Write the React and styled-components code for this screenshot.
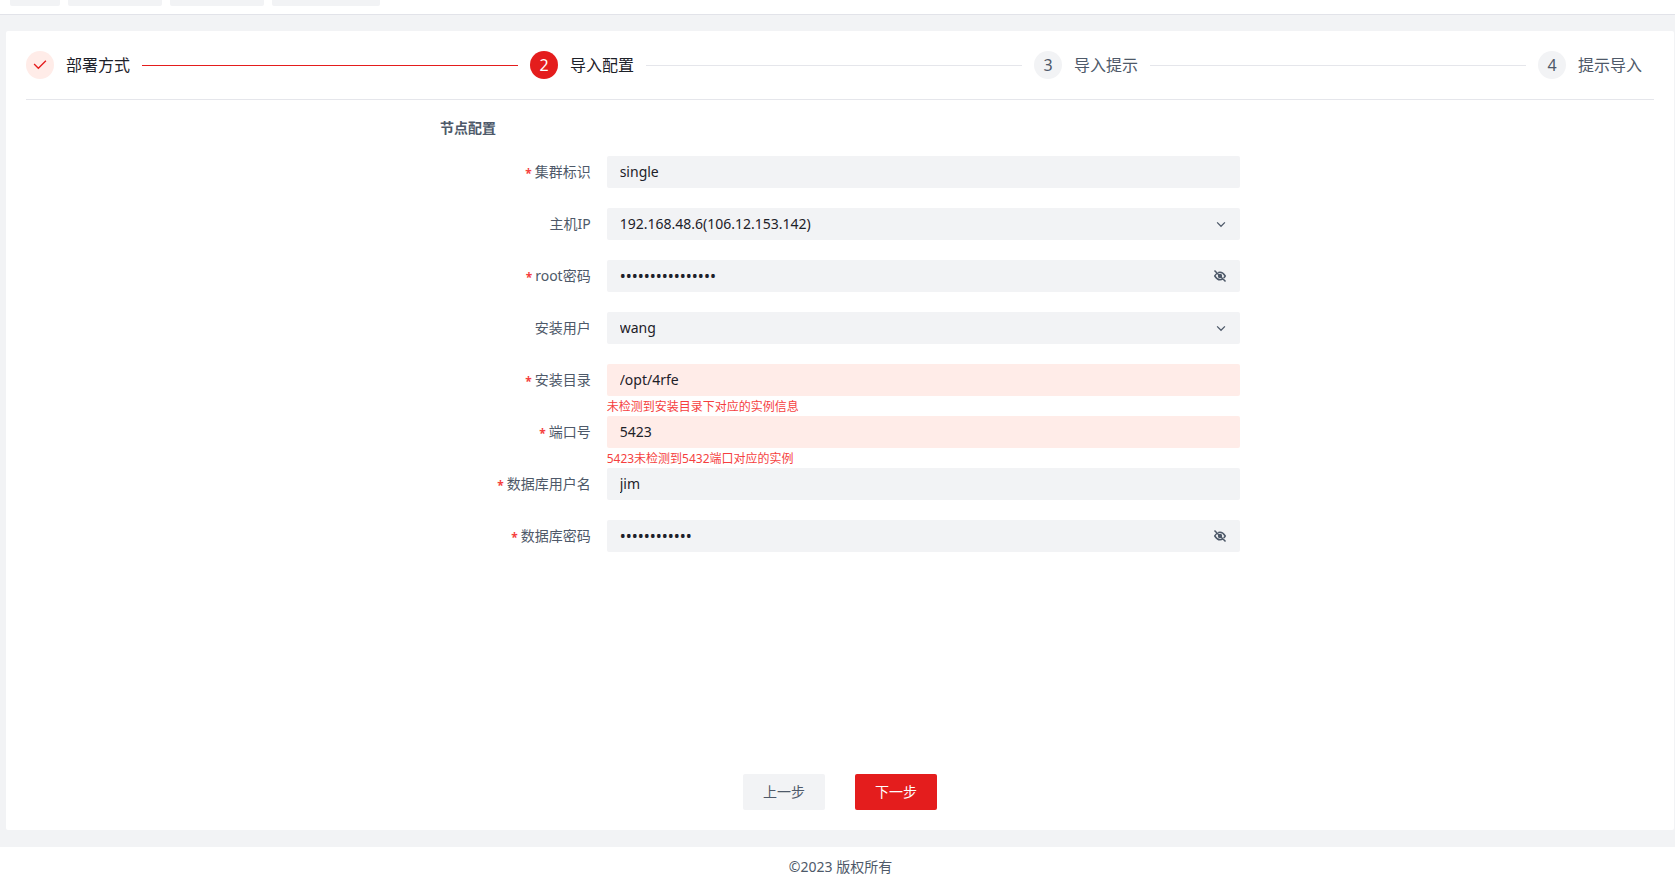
import React, { useState } from "react";
import styled, { createGlobalStyle } from "styled-components";

const GlobalStyle = createGlobalStyle`
  * {
    box-sizing: border-box;
  }

  body {
    margin: 0;
    background-color: #f2f3f5;
    color: #4e5969;
    font-family: "Noto Sans", "Noto Sans CJK SC", sans-serif;
    font-size: 14px;
    line-height: 22px;
  }

  button, input, select {
    font-family: inherit;
    font-size: inherit;
  }
`;

// Page
const Page = styled.div`
  display: flex;
  flex-direction: column;
  min-height: 100vh;
`;

const TabBar = styled.nav`
  display: flex;
  gap: 8px;
  padding: 0 10px 8px;
  background-color: #ffffff;
  border-bottom: 1px solid #e2e3e9;
`;

const Tab = styled.span`
  width: ${({ $width }) => $width}px;
  height: 6px;
  background-color: #f2f3f5;
  border-radius: 0 0 2px 2px;
`;

const Card = styled.main`
  flex: 1;
  display: flex;
  flex-direction: column;
  margin: 16px 1px 17px 6px;
  padding: 20px;
  background-color: #ffffff;
  border-radius: 2px;
`;

const Footer = styled.footer`
  padding: 9px 0 3px 6px;
  background-color: #ffffff;
  text-align: center;
`;

// Steps
const Steps = styled.ol`
  display: flex;
  margin: 0;
  padding: 0 0 20px;
  list-style: none;
  border-bottom: 1px solid #e5e6eb;
`;

const Step = styled.li`
  display: flex;
  align-items: center;
  gap: 12px;
  margin-right: 12px;
  flex: 1;
  color: ${({ $status }) => ($status === "wait" ? "#4e5969" : "#1d2129")};
  font-size: 16px;
  line-height: 28px;
  white-space: nowrap;

  &:last-child {
    flex: none;
  }
`;

const circleColors = {
  finish: { background: "#ffece8", color: "#e41d1d" },
  process: { background: "#e41d1d", color: "#ffffff" },
  wait: { background: "#f2f3f5", color: "#4e5969" },
};

const StepCircle = styled.span`
  display: flex;
  align-items: center;
  justify-content: center;
  width: 28px;
  height: 28px;
  border-radius: 50%;
  background-color: ${({ $status }) => circleColors[$status].background};
  color: ${({ $status }) => circleColors[$status].color};
`;

const StepLine = styled.span`
  flex: 1;
  height: 1px;
  background-color: ${({ $done }) => ($done ? "#e41d1d" : "#e5e6eb")};
`;

// Form
const Form = styled.form`
  flex: 1;
  display: flex;
  flex-direction: column;
`;

const Fields = styled.div`
  width: 100%;
  max-width: 800px;
  margin: 0 auto;
`;

const SectionTitle = styled.h2`
  margin: 17px 0;
  font-size: 14px;
  line-height: 22px;
  font-weight: 700;
`;

const Row = styled.div`
  display: grid;
  grid-template-columns: 5fr 19fr;
`;

const Label = styled.label`
  display: flex;
  justify-content: flex-end;
  gap: 3px;
  height: 32px;
  padding-right: 16px;
  line-height: 32px;
`;

const Required = styled.span`
  padding-top: 2px;
  color: #f53f3f;
  font-size: 12px;
  font-weight: 700;
`;

const Control = styled.div`
  position: relative;
  display: flex;
  align-items: center;
  height: 32px;
  padding-right: 12px;
  background-color: ${({ $error }) => ($error ? "#ffece8" : "#f2f3f5")};
  border-radius: 2px;
`;

const Input = styled.input`
  flex: 1;
  min-width: 0;
  height: 32px;
  padding: 0 13px 2px;
  border: none;
  outline: none;
  background: transparent;
  color: #1d2129;

  &[type="password"] {
    padding-bottom: 0;
    font-size: 16px;
  }
`;

const Select = styled.select`
  flex: 1;
  height: 32px;
  padding: 0 13px 2px;
  border: none;
  outline: none;
  appearance: none;
  background: transparent;
  color: #1d2129;
`;

const Arrow = styled.svg`
  position: absolute;
  right: 13px;
  pointer-events: none;
`;

const EyeButton = styled.button`
  display: flex;
  padding: 1px;
  border: none;
  background: transparent;
  color: #4e5969;
  cursor: pointer;
`;

const Message = styled.div`
  height: 20px;
  color: #f53f3f;
  font-size: 12px;
  line-height: 22px;
`;

const Actions = styled.div`
  display: flex;
  justify-content: center;
  gap: 30px;
  margin-top: auto;
`;

const Button = styled.button`
  height: 36px;
  padding: 0 20px 2px;
  border: none;
  border-radius: 2px;
  background-color: ${({ $primary }) => ($primary ? "#e41d1d" : "#f2f3f5")};
  color: ${({ $primary }) => ($primary ? "#ffffff" : "#4e5969")};
  cursor: pointer;
`;

const CheckIcon = () => (
  <svg width="16" height="16" viewBox="0 0 48 48" fill="none" stroke="currentColor" strokeWidth="4">
    <path d="M41.678 11.05 19.05 33.678 6.322 20.95" />
  </svg>
);

const DownIcon = () => (
  <Arrow width="12" height="12" viewBox="0 0 48 48" fill="none" stroke="#4e5969" strokeWidth="5">
    <path d="M39.6 17.443 24.043 33 8.487 17.443" />
  </Arrow>
);

const EyeOffIcon = () => (
  <svg width="14" height="14" viewBox="0 0 48 48" fill="none" stroke="currentColor" strokeWidth="5">
    <path d="M14 14.5c-2.69 2-5.415 5.33-8 9.5 5.373 8.667 11.373 13 18 13 3.325 0 6.491-1.09 9.5-3.271M17.463 12.5C19 11 21.75 11 24 11c6.627 0 12.627 4.333 18 13-1.766 2.848-3.599 5.228-5.5 7.14" />
    <path d="M29 24a5 5 0 1 1-10 0 5 5 0 0 1 10 0Z" fill="currentColor" />
    <path d="M5 5l38 38" />
  </svg>
);

const steps = [
  { title: "部署方式", status: "finish" },
  { title: "导入配置", status: "process" },
  { title: "导入提示", status: "wait" },
  { title: "提示导入", status: "wait" },
];

const fields = [
  { name: "clusterId", label: "集群标识", value: "single", required: true },
  { name: "hostIp", label: "主机IP", value: "192.168.48.6(106.12.153.142)", type: "select" },
  { name: "rootPassword", label: "root密码", value: "abcdefgh12345678", type: "password", required: true },
  { name: "installUser", label: "安装用户", value: "wang", type: "select" },
  { name: "installPath", label: "安装目录", value: "/opt/4rfe", required: true, error: "未检测到安装目录下对应的实例信息" },
  { name: "port", label: "端口号", value: "5423", required: true, error: "5423未检测到5432端口对应的实例" },
  { name: "dbUser", label: "数据库用户名", value: "jim", required: true },
  { name: "dbPassword", label: "数据库密码", value: "abcdef123456", type: "password", required: true },
];

const tabWidths = [50, 94, 94, 108];

const Field = ({ name, label, value, type, required, error }) => {
  const [text, setText] = useState(value);
  const [visible, setVisible] = useState(false);
  const isPassword = type === "password";
  const onChange = (e) => setText(e.target.value);

  return (
    <Row>
      <Label htmlFor={name}>
        {required && <Required>*</Required>}
        {label}
      </Label>
      <div>
        <Control $error={Boolean(error)}>
          {type === "select" ? (
            <>
              <Select id={name} value={text} onChange={onChange}>
                <option value={value}>{value}</option>
              </Select>
              <DownIcon />
            </>
          ) : (
            <Input
              id={name}
              type={isPassword && !visible ? "password" : "text"}
              value={text}
              onChange={onChange}
            />
          )}
          {isPassword && (
            <EyeButton type="button" aria-label={label} onClick={() => setVisible(!visible)}>
              <EyeOffIcon />
            </EyeButton>
          )}
        </Control>
        <Message>{error}</Message>
      </div>
    </Row>
  );
};

const App = () => {
  return (
    <>
      <GlobalStyle />
      <Page>
        <TabBar>
          {tabWidths.map((width, index) => (
            <Tab key={index} $width={width} />
          ))}
        </TabBar>
        <Card>
          <Steps>
            {steps.map(({ title, status }, index) => (
              <Step key={title} $status={status}>
                <StepCircle $status={status}>
                  {status === "finish" ? <CheckIcon /> : index + 1}
                </StepCircle>
                {title}
                {index < steps.length - 1 && <StepLine $done={status === "finish"} />}
              </Step>
            ))}
          </Steps>
          <Form onSubmit={(e) => e.preventDefault()}>
            <Fields>
              <SectionTitle>节点配置</SectionTitle>
              {fields.map((field) => (
                <Field key={field.name} {...field} />
              ))}
            </Fields>
            <Actions>
              <Button type="button">上一步</Button>
              <Button type="submit" $primary>下一步</Button>
            </Actions>
          </Form>
        </Card>
        <Footer>©2023 版权所有</Footer>
      </Page>
    </>
  );
};

export default App;
